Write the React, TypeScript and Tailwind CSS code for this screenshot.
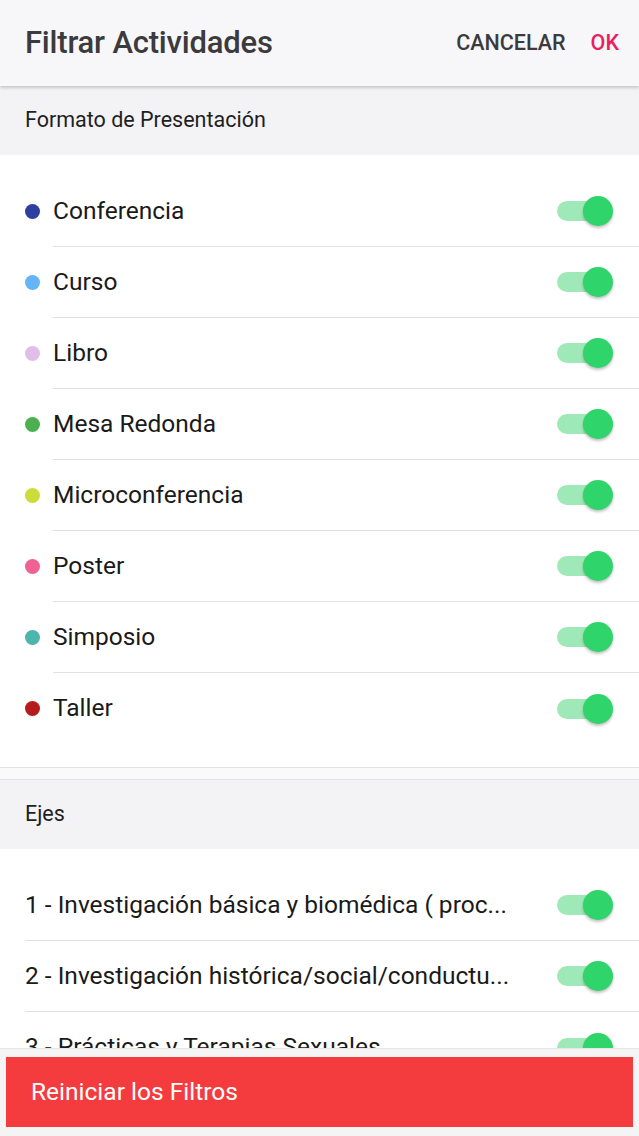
import { useState } from "react";

const formatos = [
  { name: "Conferencia", color: "#2f3f9e" },
  { name: "Curso", color: "#64b5f6" },
  { name: "Libro", color: "#e1bee7" },
  { name: "Mesa Redonda", color: "#4caf50" },
  { name: "Microconferencia", color: "#cddc39" },
  { name: "Poster", color: "#f06292" },
  { name: "Simposio", color: "#4db6ac" },
  { name: "Taller", color: "#b71c1c" },
];

const ejes = [
  "1 - Investigación básica y biomédica ( proc...",
  "2 - Investigación histórica/social/conductu...",
  "3 - Prácticas y Terapias Sexuales",
];

function Toggle({ on, onClick }: { on: boolean; onClick: () => void }) {
  return (
    <button onClick={onClick} className="relative w-[56px] h-[32px] flex items-center shrink-0">
      <span
        className={
          on
            ? "absolute left-0 right-[2px] h-[20px] rounded-full bg-[#9fe9b8]"
            : "absolute left-0 right-[2px] h-[20px] rounded-full bg-[#c8c8c8]"
        }
      />
      <span
        className={
          on
            ? "absolute right-0 w-[30px] h-[30px] rounded-full bg-[#2fd46a] shadow-[0_2px_3px_rgba(0,0,0,0.25)]"
            : "absolute left-0 w-[30px] h-[30px] rounded-full bg-[#f1f1f1] shadow-[0_2px_3px_rgba(0,0,0,0.25)]"
        }
      />
    </button>
  );
}

export default function App() {
  const [state, setState] = useState<Record<string, boolean>>({});
  const isOn = (k: string) => state[k] !== false;
  const flip = (k: string) => setState((s) => ({ ...s, [k]: !isOn(k) }));

  return (
    <div
      className="relative w-[639px] h-[1136px] overflow-hidden bg-white"
      style={{ fontFamily: "Roboto, 'Noto Sans', sans-serif" }}
    >
      <header className="relative z-10 h-[86px] bg-[#f7f6f8] flex items-center justify-between pl-[25px] pr-[20px] shadow-[0_2px_3px_rgba(0,0,0,0.18)]">
        <h1 className="text-[31px] font-medium text-[#3b3b3d] tracking-[-0.2px]">Filtrar Actividades</h1>
        <div className="flex items-center gap-[25px] text-[21.5px] font-medium">
          <span className="text-[#3b3b3d]">CANCELAR</span>
          <span className="text-[#e91e63]">OK</span>
        </div>
      </header>

      <div className="h-[69px] bg-[#f3f2f5] flex items-center pl-[25px] text-[21.5px] text-[#1f1f1f]">
        Formato de Presentación
      </div>

      <ul className="pt-[21px] pb-[23px] border-b border-[#e3e3e3]">
        {formatos.map((f, i) => (
          <li key={f.name} className="h-[71px] flex items-center pl-[25px]">
            <span className="w-[15px] h-[15px] rounded-full shrink-0" style={{ backgroundColor: f.color }} />
            <div
              className={
                i < formatos.length - 1
                  ? "ml-[13px] flex-1 h-full flex items-center justify-between pr-[26px] border-b border-[#e0e0e0]"
                  : "ml-[13px] flex-1 h-full flex items-center justify-between pr-[26px]"
              }
            >
              <span className="text-[24.5px] text-[#1a1a1a]">{f.name}</span>
              <Toggle on={isOn(f.name)} onClick={() => flip(f.name)} />
            </div>
          </li>
        ))}
      </ul>

      <div className="h-[11px] bg-[#fbfafb]" />

      <div className="h-[70px] bg-[#f3f2f5] border-t border-[#e3e3e3] flex items-center pl-[25px] text-[21.5px] text-[#1f1f1f]">
        Ejes
      </div>

      <ul className="pt-[21px]">
        {ejes.map((e, i) => (
          <li
            key={e}
            className={
              i < ejes.length - 1
                ? "ml-[25px] h-[71px] flex items-center justify-between pr-[26px] border-b border-[#e0e0e0]"
                : "ml-[25px] h-[71px] flex items-center justify-between pr-[26px]"
            }
          >
            <span className="text-[24.5px] text-[#1a1a1a] whitespace-nowrap">{e}</span>
            <Toggle on={isOn(e)} onClick={() => flip(e)} />
          </li>
        ))}
      </ul>

      <div className="absolute left-0 right-0 bottom-0 h-[88px] bg-[#f4f4f4] border-t border-[#e6e6e6] px-[6px] pt-[8px]">
        <button className="w-full h-[70px] bg-[#f43b3e] flex items-center pl-[25px] text-white text-[24.5px]">
          Reiniciar los Filtros
        </button>
      </div>
    </div>
  );
}
